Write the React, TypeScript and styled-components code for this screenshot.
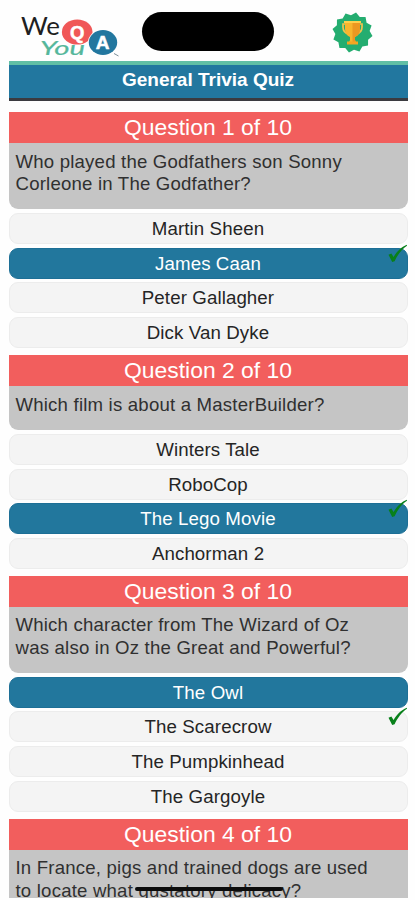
import React from 'react';
import styled, { createGlobalStyle } from 'styled-components';

const GlobalStyle = createGlobalStyle`
  * { box-sizing: border-box; }
  body { margin: 0; background: #fefefe; }
`;

const Screen = styled.main`
  position: relative;
  width: 415px;
  height: 898px;
  padding: 0 7.5px 0 8.5px;
  overflow: hidden;
  font-family: 'Liberation Sans', Arial, sans-serif;
  color: #303030;
`;

const Header = styled.header`
  height: 61px;
  padding: 12px 35px 0 11px;
  display: flex;
  justify-content: space-between;
  align-items: flex-start;
`;

const Logo = styled.svg`
  display: block;
  width: 101px;
  height: 48px;
  overflow: visible;
`;

const Badge = styled.svg`
  display: block;
  width: 41px;
  height: 41px;
`;

const Island = styled.div`
  position: absolute;
  left: 142px;
  top: 12.4px;
  width: 131.5px;
  height: 38.4px;
  border-radius: 20px;
  background: #000;
`;

const HomeIndicator = styled.div`
  position: absolute;
  left: 135px;
  top: 887px;
  width: 148px;
  height: 4px;
  border-radius: 2px;
  background: #0c0c0c;
`;

const TitleBar = styled.h1`
  margin: 0 0 11.7px;
  height: 39.8px;
  border-top: 4px solid #61bfa5;
  border-bottom: 3px solid #3b3b40;
  background: #22779f;
  color: #fff;
  font-size: 19px;
  line-height: 30px;
  font-weight: 700;
  text-align: center;
`;

const QuestionBlock = styled.section`
  padding-bottom: 3.6px;
`;

const QuestionHeading = styled.h2`
  margin: 0;
  height: 30.5px;
  background: #f25e5d;
  color: #fff;
  font-size: 22.9px;
  line-height: 31.4px;
  font-weight: 400;
  text-align: center;
`;

const Prompt = styled.p`
  margin: 0 0 3.9px;
  padding: 7.8px 7px 14px;
  border-radius: 0 0 9px 9px;
  background: #c5c5c5;
  font-size: 18.6px;
  line-height: 22.2px;
  letter-spacing: 0.2px;
  white-space: pre-line;
`;

const Option = styled.div<{ $selected: boolean }>`
  position: relative;
  height: 31px;
  margin-bottom: 3.7px;
  border: 1px solid ${(p) => (p.$selected ? '#1d6f96' : '#ececec')};
  border-radius: 9px;
  background: ${(p) => (p.$selected ? '#22779d' : '#f4f4f4')};
  color: ${(p) => (p.$selected ? '#fff' : '#252525')};
  font-size: 18.7px;
  line-height: 30px;
  letter-spacing: 0.1px;
  text-align: center;
`;

const Tick = styled.svg`
  position: absolute;
  right: -1px;
  top: -5px;
  width: 20px;
  height: 20px;
`;

type Question = {
  prompt: string;
  options: string[];
  selected?: number;
  correct?: number;
};

const questions: Question[] = [
  {
    prompt: 'Who played the Godfathers son Sonny\nCorleone in The Godfather?',
    options: ['Martin Sheen', 'James Caan', 'Peter Gallagher', 'Dick Van Dyke'],
    selected: 1,
    correct: 1,
  },
  {
    prompt: 'Which film is about a MasterBuilder?',
    options: ['Winters Tale', 'RoboCop', 'The Lego Movie', 'Anchorman 2'],
    selected: 2,
    correct: 2,
  },
  {
    prompt: 'Which character from The Wizard of Oz\nwas also in Oz the Great and Powerful?',
    options: ['The Owl', 'The Scarecrow', 'The Pumpkinhead', 'The Gargoyle'],
    selected: 0,
    correct: 1,
  },
  {
    prompt: 'In France, pigs and trained dogs are used\nto locate what gustatory delicacy?',
    options: [],
  },
];

const badgePoints = Array.from({ length: 24 }, (_, i) => {
  const radius = i % 2 === 0 ? 20.3 : 17.2;
  const angle = ((i * 15 - 80) * Math.PI) / 180;
  return `${20.5 + radius * Math.cos(angle)},${20.5 + radius * Math.sin(angle)}`;
}).join(' ');

function BrandLogo() {
  return (
    <Logo viewBox="0 0 101 48" role="img" aria-label="We You QA">
      <g fontFamily="Lato, sans-serif" fontWeight="400">
        <text x="1" y="23" fontSize="25" fill="#202020" textLength="39" lengthAdjust="spacingAndGlyphs">We</text>
        <text x="20" y="43" fontSize="20" fontStyle="italic" fill="#55b79b" stroke="#55b79b" strokeWidth="0.2" textLength="45" lengthAdjust="spacingAndGlyphs">You</text>
      </g>
      <ellipse cx="57.2" cy="20" rx="15.3" ry="12.6" fill="#f05757" />
      <ellipse cx="83" cy="30.5" rx="15" ry="13.2" fill="#fefefe" />
      <ellipse cx="83" cy="30.5" rx="14.2" ry="12.4" fill="#22779f" />
      <path d="M94 41.5 98.5 44" stroke="#7d8f99" strokeWidth="1" />
      <g fontFamily="Liberation Sans, sans-serif" fontWeight="700" fill="#fff" stroke="#fff" strokeWidth="0.5" textAnchor="middle">
        <text x="57.2" y="26.5" fontSize="18.5">Q</text>
        <text x="82.6" y="37" fontSize="19">A</text>
      </g>
    </Logo>
  );
}

function TrophyBadge() {
  return (
    <Badge viewBox="0 0 41 41" role="img" aria-label="Trophy">
      <polygon points={badgePoints} fill="#24ad70" />
      <path d="M14 12H11v3q0 6 6 7M27 12h3v3q0 6-6 7" fill="none" stroke="#f2c24e" strokeWidth="1.7" />
      <path d="M13 10h15v7q0 6-5 8v3q0 2 3 3H15q3-1 3-3v-3q-5-2-5-8Z" fill="#f7b52d" />
      <path d="M20.5 10H28v7q0 6-5 8v3q0 2 3 3h-5.5Z" fill="#ec9821" />
      <path d="M12 9h17v2H12Z" fill="#ffce4b" />
      <path d="M15 29.5h11v3H15Z" fill="#f3a621" />
    </Badge>
  );
}

function CorrectTick() {
  return (
    <Tick viewBox="0 0 20 20" aria-hidden="true">
      <path d="M0.5 10.8 3.4 9.5 5.6 13C8.5 8 13 3 18.8.8L19 1.7C13.8 5 9.2 11.3 6.6 17.3L4.2 18Z" fill="#08801a" />
    </Tick>
  );
}

export default function App() {
  return (
    <>
      <GlobalStyle />
      <Screen>
        <Header>
          <BrandLogo />
          <TrophyBadge />
        </Header>
        <TitleBar>General Trivia Quiz</TitleBar>
        {questions.map((question, index) => (
          <QuestionBlock key={question.prompt}>
            <QuestionHeading>Question {index + 1} of 10</QuestionHeading>
            <Prompt>{question.prompt}</Prompt>
            {question.options.map((option, i) => (
              <Option key={option} $selected={question.selected === i}>
                {option}
                {question.correct === i && <CorrectTick />}
              </Option>
            ))}
          </QuestionBlock>
        ))}
        <Island />
        <HomeIndicator />
      </Screen>
    </>
  );
}
